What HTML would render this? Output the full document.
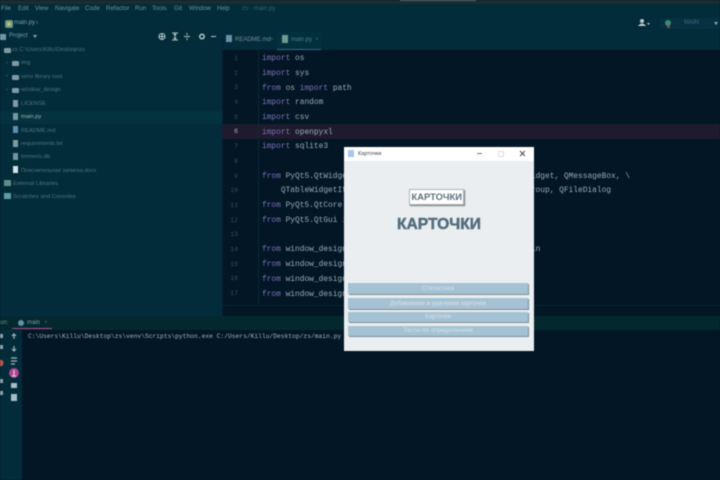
<!DOCTYPE html>
<html><head><meta charset="utf-8"><style>
html,body{margin:0;padding:0;width:720px;height:480px;overflow:hidden;background:#021626}
body{position:relative;font-family:"Liberation Sans",sans-serif}
.a{position:absolute;white-space:pre}
.blur{position:absolute;left:0;top:0;width:720px;height:480px;filter:blur(.4px)}
.m{font-size:6.2px;color:#6f8f99;top:5px}
.t{font-size:5.8px;color:#4f7680}
.n{font-family:"Liberation Mono",monospace;font-size:6.5px;color:#354e5c;width:20px;text-align:right;left:218px}
.c{font-family:"Liberation Mono",monospace;font-size:7.87px;color:#97abb6;left:262px}
.k{color:#7f72b4}
.f{position:absolute;width:7px;height:5px;background:#7f9aa3;border-radius:1px}
.d{position:absolute;width:5px;height:7px;background:#7f98a6}
.b{position:absolute;left:348px;width:180px;background:#a5c2d5;box-shadow:1px 1px 0 #7d8b92;color:#d5e1e8;font-size:6.2px;text-align:center}
</style></head><body>
<div class="blur">
<div class="a" style="left:0;top:0;width:720px;height:50px;background:#022c39"></div>
<div class="a" style="left:0;top:0;width:720px;height:4px;background:#1a2d31"></div>
<div class="a" style="left:400px;top:0;width:76px;height:1px;background:#5f6f72"></div>
<div class="a" style="left:0;top:50px;width:222px;height:266px;background:#022c39"></div>
<div class="a" style="left:222px;top:33px;width:1px;height:283px;background:#04222e"></div>
<div class="a" style="left:0;top:111px;width:222px;height:13px;background:#05323f"></div>

<span class="a m" style="left:1px">File</span><span class="a m" style="left:18px">Edit</span><span class="a m" style="left:35px">View</span><span class="a m" style="left:55px">Navigate</span><span class="a m" style="left:85px">Code</span><span class="a m" style="left:106px">Refactor</span><span class="a m" style="left:135px">Run</span><span class="a m" style="left:152px">Tools</span><span class="a m" style="left:174px">Git</span><span class="a m" style="left:189px">Window</span><span class="a m" style="left:217px">Help</span>
<span class="a m" style="left:242px;color:#3f636d">zs - main.py</span>

<svg class="a" style="left:5px;top:20px" width="8" height="8"><rect width="8" height="8" rx="2" fill="#5f9a8f"/><rect x="2" y="2" width="4" height="4" fill="#c9b765"/></svg>
<span class="a" style="left:14px;top:20px;font-size:6px;color:#7f9da6">main.py</span>
<span class="a" style="left:36px;top:20px;font-size:6px;color:#7f9da6">›</span>

<div class="a" style="left:0;top:34px;width:6px;height:6px;background:#6f98a6"></div>
<span class="a" style="left:9px;top:33px;font-size:6px;color:#7b9aa4">Project</span>
<span class="a" style="left:33px;top:35px;width:0;height:0;border:2px solid transparent;border-top:3px solid #8ba6ae"></span>
<svg class="a" style="left:158px;top:31px" width="60" height="11" fill="none" stroke="#b3c6cb" stroke-width="1">
<circle cx="4" cy="5.5" r="3"/><path d="M1 5.5H7M4 2.5V8.5"/>
<path d="M14 2H20M14 9H20M17 3V8M15.5 4L17 3L18.5 4M15.5 7L17 8L18.5 7"/>
<path d="M26 5.5H32M29 2V4M29 7V9"/>
<circle cx="44" cy="5.5" r="2.2" stroke-width="1.5"/>
<path d="M53 5.5H58"/></svg>

<div class="f" style="left:4px;top:48px"></div><span class="a t" style="left:12px;top:47px">zs C:\Users\Killu\Desktop\zs</span>
<span class="a t" style="left:6px;top:60px">›</span><div class="f" style="left:12px;top:61px"></div><span class="a t" style="left:21px;top:60px">img</span>
<span class="a t" style="left:6px;top:73px">›</span><div class="f" style="left:12px;top:75px"></div><span class="a t" style="left:21px;top:74px">venv library root</span>
<span class="a t" style="left:6px;top:87px">›</span><div class="f" style="left:12px;top:88px"></div><span class="a t" style="left:21px;top:87px">window_design</span>
<div class="d" style="left:13px;top:100px"></div><span class="a t" style="left:21px;top:100.5px">LICENSE</span>
<div class="d" style="left:13px;top:113px;background:#6f9a9a"></div><span class="a t" style="left:21px;top:114px;color:#9fb5bc">main.py</span>
<div class="d" style="left:13px;top:126px;background:#5f8fb0"></div><span class="a t" style="left:21px;top:127.5px">README.md</span>
<div class="d" style="left:13px;top:140px"></div><span class="a t" style="left:21px;top:140.5px">requirements.txt</span>
<div class="d" style="left:13px;top:153px;background:#6f93a8"></div><span class="a t" style="left:21px;top:154px">termeris.db</span>
<div class="d" style="left:13px;top:166px;background:#d5e2ea"></div><span class="a t" style="left:21px;top:167.5px;font-size:5.6px">Пояснительная записка.docx</span>
<div class="a" style="left:4px;top:180px;width:7px;height:6px;background:#5f8f88"></div><span class="a t" style="left:13px;top:180.5px">External Libraries</span>
<div class="a" style="left:4px;top:193px;width:7px;height:6px;background:#5f9aa8"></div><span class="a t" style="left:13px;top:193.5px">Scratches and Consoles</span>

<div class="a" style="left:226px;top:35px;width:6px;height:7px;background:#6a90a8"></div>
<span class="a" style="left:235px;top:37px;font-size:6px;color:#6f8f99">README.md</span><span class="a" style="left:270px;top:37px;font-size:6px;color:#3f636d">×</span>
<div class="a" style="left:277px;top:32px;width:44px;height:17px;background:#03303d"></div>
<div class="a" style="left:277px;top:49px;width:44px;height:1px;background:#2a6f8a"></div>
<div class="a" style="left:282px;top:35px;width:6px;height:8px;background:#6f9a8f"></div>
<span class="a" style="left:291px;top:37px;font-size:6px;color:#4f7f8a">main.py</span><span class="a" style="left:315px;top:37px;font-size:6px;color:#3f636d">×</span>

<svg class="a" style="left:638px;top:18px" width="12" height="10"><circle cx="4" cy="3" r="2" fill="#b9c8cc"/><path d="M0 8Q4 3 8 8Z" fill="#b9c8cc"/><path d="M9 5H12L10.5 7Z" fill="#b9c8cc"/></svg>
<div class="a" style="left:660px;top:18px;width:60px;height:11px;background:#073041"></div>
<div class="a" style="left:665px;top:20px;width:6px;height:6px;border-radius:3px;background:#3f8a70"></div>
<div class="a" style="left:667px;top:26px;width:3px;height:2px;background:#7f4a4a"></div>
<span class="a" style="left:684px;top:20px;font-size:6px;color:#3f6a80">MAIN</span>
<div class="a" style="left:714px;top:22px;width:0;height:0;border:2px solid transparent;border-top:3px solid #8fa8b0"></div>

<div class="a" style="left:222px;top:124px;width:498px;height:15px;background:#1f1b2e"></div>
<div class="a" style="left:258px;top:50px;width:1px;height:255px;background:#0b2a38"></div>
<div class="a" style="left:222px;top:305px;width:498px;height:1px;background:#0a2430"></div>

<span class="a n" style="top:54.5px">1</span><span class="a n" style="top:69.5px">2</span><span class="a n" style="top:84px">3</span><span class="a n" style="top:99px">4</span><span class="a n" style="top:113.5px">5</span><span class="a n" style="top:128px;color:#b9a8b8">6</span><span class="a n" style="top:143px">7</span><span class="a n" style="top:158px">8</span><span class="a n" style="top:172.5px">9</span><span class="a n" style="top:187px">10</span><span class="a n" style="top:202px">11</span><span class="a n" style="top:216.5px">12</span><span class="a n" style="top:231px">13</span><span class="a n" style="top:246px">14</span><span class="a n" style="top:260.5px">15</span><span class="a n" style="top:275px">16</span><span class="a n" style="top:290px">17</span>

<span class="a c" style="top:54px"><span class="k">import</span> os</span>
<span class="a c" style="top:69px"><span class="k">import</span> sys</span>
<span class="a c" style="top:83.5px"><span class="k">from</span> os <span class="k">import</span> path</span>
<span class="a c" style="top:98px"><span class="k">import</span> random</span>
<span class="a c" style="top:113px"><span class="k">import</span> csv</span>
<span class="a c" style="top:127.5px"><span class="k">import</span> openpyxl</span>
<span class="a c" style="top:142px"><span class="k">import</span> sqlite3</span>
<span class="a c" style="top:171.5px"><span class="k">from</span> PyQt5.QtWidgets <span class="k">import</span> QApplication, QMainWindow, QWidget, QMessageBox, \</span>
<span class="a c" style="top:186px">    QTableWidgetItem, QInputDialog, QPushButton, QButtonGroup, QFileDialog</span>
<span class="a c" style="top:201px"><span class="k">from</span> PyQt5.QtCore <span class="k">import</span> Qt</span>
<span class="a c" style="top:215.5px"><span class="k">from</span> PyQt5.QtGui <span class="k">import</span> QIcon</span>
<span class="a c" style="top:245px"><span class="k">from</span> window_design.main <span class="k">import</span> Ui_MainWindow_Main_Main_main</span>
<span class="a c" style="top:260px"><span class="k">from</span> window_design.cards</span>
<span class="a c" style="top:274.5px"><span class="k">from</span> window_design.stats</span>
<span class="a c" style="top:289.5px"><span class="k">from</span> window_design.tests</span>

<div class="a" style="left:0;top:316px;width:720px;height:14px;background:#03292f"></div>
<div class="a" style="left:0;top:330px;width:22px;height:150px;background:#022c39"></div>
<span class="a" style="left:0;top:320px;font-size:6px;color:#6f8f99">un:</span>
<div class="a" style="left:18px;top:320px;width:6px;height:6px;border-radius:3px;background:#5f93a8"></div>
<span class="a" style="left:27px;top:320px;font-size:6px;color:#7f9da6">main</span>
<span class="a" style="left:44px;top:320px;font-size:6px;color:#3f636d">×</span>
<div class="a" style="left:12px;top:328px;width:40px;height:1px;background:#b04a9a"></div>
<svg class="a" style="left:0;top:330px" width="22" height="72" fill="none" stroke="#9fb5bc" stroke-width="1.2">
<path d="M14 9V4M12 6L14 4L16 6M14 16V21M12 19L14 21L16 19M11 31H17M11 28H17M11 34H15"/>
<circle cx="14" cy="43" r="5" fill="#b0468f" stroke="none"/>
<path d="M14 40V45M12 46H16" stroke="#e6d0e0"/>
<rect x="11" y="53" width="6" height="5" fill="#a9bcc2" stroke="none"/>
<rect x="11" y="64" width="6" height="7" fill="#a9bcc2" stroke="none"/>
<rect x="0" y="4" width="3" height="4" fill="#8fa5ad" stroke="none"/>
<rect x="0" y="15" width="3" height="4" fill="#8fa5ad" stroke="none"/>
<circle cx="0" cy="33" r="3.5" fill="#c25252" stroke="none"/>
<rect x="0" y="49" width="3" height="4" fill="#8fa5ad" stroke="none"/>
<rect x="0" y="61" width="3" height="4" fill="#8fa5ad" stroke="none"/>
</svg>
<span class="a" style="left:28px;top:332.5px;font-family:'Liberation Mono',monospace;font-size:6.2px;letter-spacing:.06px;color:#a3b6c0">C:\Users\Killu\Desktop\zs\venv\Scripts\python.exe C:/Users/Killu/Desktop/zs/main.py</span>

<div class="a" style="left:344px;top:147px;width:190px;height:204px;background:#eaeef0"></div>
<div class="a" style="left:344px;top:147px;width:190px;height:14px;background:#fff"></div>
<div class="a" style="left:348px;top:150px;width:6px;height:7px;background:#a9c8e6"></div>
<span class="a" style="left:358px;top:151px;font-size:5.6px;color:#3c4a50">Карточки</span>
<div class="a" style="left:477px;top:153px;width:5px;height:1px;background:#777"></div>
<div class="a" style="left:498px;top:151px;width:4px;height:4px;border:1px solid #ddd"></div>
<svg class="a" style="left:519px;top:150px" width="7" height="7" stroke="#444" stroke-width=".9"><path d="M1 1L6 6M6 1L1 6"/></svg>

<div class="a" style="left:409px;top:189px;width:53px;height:14px;background:#fff;border:1px solid #a9b4b9;box-shadow:1px 1px 1px #777"></div>
<span class="a" style="left:411.5px;top:191px;font-size:9.4px;font-weight:bold;color:#5a717d">КАРТОЧКИ</span>
<span class="a" style="left:397px;top:215.5px;font-size:15.6px;font-weight:bold;color:#546e7c;-webkit-text-stroke:.5px #546e7c">КАРТОЧКИ</span>

<div class="b" style="top:283px;height:11px;line-height:11px">Статистика</div>
<div class="b" style="top:298px;height:11px;line-height:11px">Добавление и удаление карточек</div>
<div class="b" style="top:312px;height:10px;line-height:10px">Карточки</div>
<div class="b" style="top:326px;height:10px;line-height:10px">Тесты по определениям</div>
</div>
</body></html>
